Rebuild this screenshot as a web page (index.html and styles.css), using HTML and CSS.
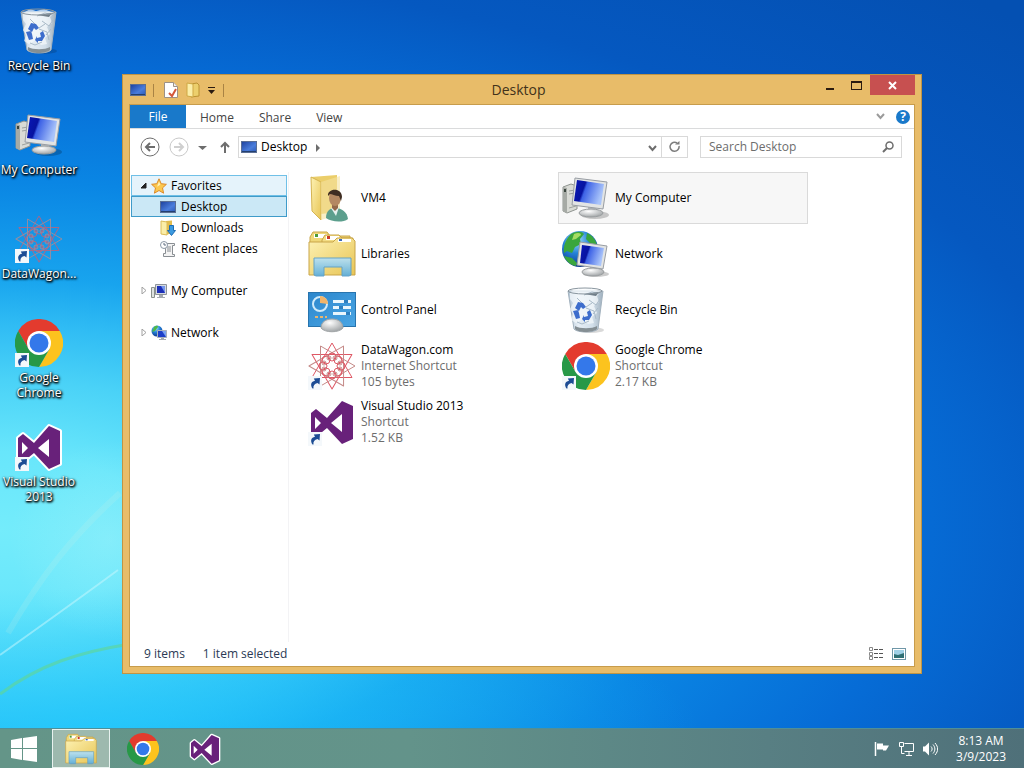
FILE: index.html
```
<!DOCTYPE html>
<html lang="en">

    <head>
        <meta charset="UTF-8">
        <meta name="viewport" content="width=device-width, initial-scale=1.0">
        <title>Desktop</title>
        <link rel="stylesheet" href="styles.css">
    </head>

    <body>
        <!-- icon sprite -->
        <svg class="sprite" aria-hidden="true">
            <defs>
                <linearGradient id="gScreen" x1="0" y1="0" x2="1" y2="0.3">
                    <stop offset="0" stop-color="#0a18b8" />
                    <stop offset="0.38" stop-color="#0713a0" />
                    <stop offset="0.45" stop-color="#3d62e6" />
                    <stop offset="1" stop-color="#a9c4fa" />
                </linearGradient>
                <linearGradient id="gSmall" x1="0" y1="0" x2="1" y2="1">
                    <stop offset="0" stop-color="#1c3f9c" />
                    <stop offset="0.6" stop-color="#4a7ddc" />
                    <stop offset="1" stop-color="#2b58b4" />
                </linearGradient>
                <linearGradient id="gFolder" x1="0" y1="0" x2="1" y2="1">
                    <stop offset="0" stop-color="#fdf2b4" />
                    <stop offset="1" stop-color="#e8c555" />
                </linearGradient>
                <linearGradient id="gStand" x1="0" y1="0" x2="0" y2="1">
                    <stop offset="0" stop-color="#b9e2f6" />
                    <stop offset="1" stop-color="#5aaee0" />
                </linearGradient>
                <linearGradient id="gPanel" x1="0" y1="0" x2="1" y2="1">
                    <stop offset="0" stop-color="#2b86cc" />
                    <stop offset="1" stop-color="#4ba6e4" />
                </linearGradient>
                <linearGradient id="gBin" x1="0" y1="0" x2="1" y2="0">
                    <stop offset="0" stop-color="#b4c6d6" />
                    <stop offset="0.3" stop-color="#e6eef5" />
                    <stop offset="0.7" stop-color="#d2dfea" />
                    <stop offset="1" stop-color="#9fb0be" />
                </linearGradient>
                <radialGradient id="gGlobe" cx="0.4" cy="0.25" r="0.8">
                    <stop offset="0" stop-color="#a8e4fb" />
                    <stop offset="0.45" stop-color="#2583d8" />
                    <stop offset="1" stop-color="#0c2f88" />
                </radialGradient>
                <radialGradient id="gBase" cx="0.4" cy="0.3" r="0.7">
                    <stop offset="0" stop-color="#ffffff" />
                    <stop offset="1" stop-color="#a2a6a8" />
                </radialGradient>
            </defs>

            <symbol id="arrow" viewBox="0 0 14 14">
                <rect width="14" height="14" fill="#f4f8fb" />
                <path d="M4.500 12.500C2 9 3 5.500 7 4.800L5.800 2.500 12 2l-.5 6.500-2-1.600C6.500 7.500 5 9.500 5.500 12.500z" fill="#1d4c94" />
            </symbol>

            <symbol id="computer" viewBox="0 0 48 48">
                <ellipse cx="33" cy="41" rx="14" ry="4" fill="#000" opacity="0.2" />
                <path d="M1 13l8-3 6 2v23L5 39l-4-2z" fill="#d9dbd6" stroke="#8f9490" />
                <path d="M1 13l4 1v25l-4-2z" fill="#a6aaa5" />
                <path d="M2 15h2v3H2z" fill="#39443d" />
                <path d="M7 17l6-1M7 20l6-1M7 34l7-2" stroke="#9da19e" />
                <path d="M26 31l9 1-1 7h-8z" fill="#b9bdc0" />
                <ellipse cx="29" cy="39" rx="12" ry="4" fill="url(#gBase)" stroke="#9a9ea0" />
                <path d="M13 4l32 4-4 27-31-4z" fill="#e2e4e4" stroke="#989da3" />
                <path d="M15 6l27 4-3 21-27-4z" fill="url(#gScreen)" />
            </symbol>

            <symbol id="network" viewBox="0 0 48 48">
                <circle cx="18" cy="19" r="18" fill="url(#gGlobe)" />
                <path d="M9 4c5-3 11-3 13 0l-4 5 1 5-6 3-3 6-5-2-3 2c-1-7 2-14 7-19zM2 26l8 2 5 5-1 3C8 35 4 31 2 26zM25 3c5 2 9 7 10 12l-6-1-5-5z" fill="#3aa63c" />
                <path d="M12 4c4-2 7-1 7 1l-5 4-4 1z" fill="#a5dd64" />
                <ellipse cx="34" cy="44" rx="13" ry="3" fill="#000" opacity="0.2" />
                <path d="M28 36l7 1-1 5h-6z" fill="#b9bdc0" />
                <ellipse cx="31" cy="42" rx="11" ry="4" fill="url(#gBase)" stroke="#9a9ea0" />
                <path d="M18 12l27 4-4 23-26-4z" fill="#e2e4e4" stroke="#989da3" />
                <path d="M20 15l22 3-3 18-21-3z" fill="url(#gScreen)" />
            </symbol>

            <symbol id="bin" viewBox="0 0 48 48">
                <ellipse cx="29" cy="44" rx="13" ry="3" fill="#000" opacity="0.15" />
                <path d="M6 5l6 38c3 4 21 4 24 0l5-38z" fill="url(#gBin)" stroke="#a3b2be" />
                <path d="M8 6l7-4 6 2 8-2 5 2 5 2-4 4 2 6-5 4 3 7-5 4 2 6-6 1-5-5-7 4-5-3 2-6-3-5 3-6-3-4z" fill="#f5f9fc" opacity="0.7" />
                <path d="M22 9l8-3 8 2M27 14l7 5 4-6M24 22l8 3 2 8M15 12l6 6M15 36l5 2 7-3M30 17l-6 4M36 22l-5 6" fill="none" stroke="#a9bac8" />
                <path d="M22 8l15-2-3 4z" fill="#6f7d88" />
                <ellipse cx="23" cy="5" rx="17" ry="3" fill="none" stroke="#8a969f" />
                <path d="M13 40c5 3 17 3 22 0v3c-4 4-19 4-22 0z" fill="#858f94" />
                <path d="M13 22l3-6 5 1 3 4-3 2-2-2-2 4zM11 25l5-1 1 3 1 5-4 1zM20 33l2-4v2l4-1-1-4 3-2 2 5-3 5h-4v2z" fill="#3d6dcc" />
            </symbol>

            <symbol id="chrome" viewBox="0 0 48 48">
                <path d="M3.200 12A24 24 0 0 1 44.800 12H24V24L13.600 30z" fill="#e33b2e" />
                <path d="M44.800 12A24 24 0 0 1 24 48L34.400 30 24 24V12z" fill="#fcc31e" />
                <path d="M24 48A24 24 0 0 1 3.200 12L13.600 30 24 24l10.400 6z" fill="#279847" />
                <circle cx="24" cy="24" r="12" fill="#fff" />
                <circle cx="24" cy="24" r="9.500" fill="#3478ea" />
            </symbol>

            <symbol id="vs" viewBox="0 0 48 48">
                <path d="M3 15l5-4 11 9L34 3l11 5v33l-11 5-15-16-11 9-5-4z" fill="#68217a" stroke="#fff" stroke-width="4" stroke-linejoin="round" />
                <path d="M3 15l5-4 11 9L34 3l11 5v33l-11 5-15-16-11 9-5-4z" fill="#68217a" />
                <path d="M7 19v12l6-6zM34 16v18l-11-9z" fill="#fff" />
            </symbol>

            <symbol id="wagon" viewBox="0 0 48 48">
                <g fill="none" stroke-linejoin="round">
                    <g stroke="#df5966">
                        <path d="M24 1l20 34.500H4z" />
                        <path d="M24 1l20 34.500H4z" transform="rotate(60 24 24)" />
                    </g>
                    <g stroke="#c58a88">
                        <path d="M24 1l20 34.500H4z" transform="rotate(30 24 24)" />
                        <path d="M24 1l20 34.500H4z" transform="rotate(90 24 24)" />
                    </g>
                    <g stroke="#df5966">
                        <circle cx="24" cy="15" r="4" />
                        <circle cx="30" cy="18" r="4" />
                        <circle cx="33" cy="24" r="4" />
                        <circle cx="30" cy="30" r="4" />
                        <circle cx="24" cy="33" r="4" />
                        <circle cx="18" cy="30" r="4" />
                        <circle cx="15" cy="24" r="4" />
                        <circle cx="18" cy="18" r="4" />
                    </g>
                    <g stroke="#c58a88">
                        <circle cx="27" cy="16" r="2" />
                        <circle cx="32" cy="21" r="2" />
                        <circle cx="32" cy="27" r="2" />
                        <circle cx="27" cy="32" r="2" />
                        <circle cx="21" cy="32" r="2" />
                        <circle cx="16" cy="27" r="2" />
                        <circle cx="16" cy="21" r="2" />
                        <circle cx="21" cy="16" r="2" />
                    </g>
                </g>
            </symbol>

            <symbol id="libraries" viewBox="0 0 48 48">
                <path d="M2 44V7l3-5h14l3 4h20v38z" fill="#f0d878" stroke="#c9a548" />
                <path d="M6 4h13v4H6z" fill="#fff" />
                <path d="M7 4h3v3H7z" fill="#4d9a3a" />
                <path d="M14 10l3-5h14l3 3h11v8H14z" fill="#f3dd84" stroke="#c9a548" />
                <path d="M18 6h13v4H18z" fill="#fff" />
                <path d="M19 6h3v3h-3z" fill="#cc3d28" />
                <path d="M1 12h24l4-4h15l3 3v34H1z" fill="url(#gFolder)" stroke="#c9a548" />
                <path d="M30 9h13v3H30z" fill="#fff" />
                <path d="M31 9h3v2h-3z" fill="#3b67b8" />
                <path d="M6 28h37v17l-2 1h-7v-9H16v9H8l-2-1z" fill="url(#gStand)" stroke="#5a9fcb" opacity="0.92" />
            </symbol>

            <symbol id="panel" viewBox="0 0 48 48">
                <rect x="0.500" y="6.500" width="47" height="34" fill="url(#gPanel)" stroke="#2874ae" />
                <circle cx="12" cy="18" r="7" fill="none" stroke="#cfeafa" stroke-width="2" />
                <path d="M12 17V10a8 8 0 0 1 8 8z" fill="#f1b46a" />
                <path d="M25 14h18v3H25zM25 20h18v3H25zM25 26h18v3H25z" fill="#e8f6fd" />
                <path d="M36 14h4v3h-4zM31 20h4v3h-4zM38 26h4v3h-4z" fill="#2c7fc0" />
                <path d="M7 31h12" stroke="#e8b56e" stroke-width="2" stroke-dasharray="3 2" />
                <path d="M13 42c0-6 5-9 11-9s11 3 11 9c-4 5-18 5-22 0z" fill="url(#gBase)" stroke="#a2a6a8" />
            </symbol>

            <symbol id="user" viewBox="0 0 48 48">
                <path d="M3 3l26-2v37l-16 2z" fill="#ebce6a" />
                <path d="M3 3l10 5v38L4 37z" fill="url(#gFolder)" stroke="#d5b452" />
                <path d="M13 8L32 2v38l-19 6z" fill="#f5e3a0" opacity="0.6" />
                <path d="M18 44c0-7 4-10 9-10 7 0 12 4 13 11-5 4-17 3-22-1z" fill="#5c9f8d" />
                <path d="M23 34l8-1-3 9z" fill="#e6f1ee" />
                <path d="M24 28h6v6l-3 3-3-3z" fill="#94694a" />
                <ellipse cx="27" cy="24" rx="6" ry="8" fill="#b48862" />
                <path d="M20 22c-1-8 14-9 14 1l-1 4-2-5c-4 0-7-2-9-2z" fill="#3f2d22" />
            </symbol>

            <symbol id="desk" viewBox="0 0 16 16">
                <rect x="0.500" y="2.500" width="15" height="11" fill="url(#gSmall)" stroke="#5a6e94" />
                <path d="M1 12.500h14" stroke="#24406f" />
            </symbol>

            <symbol id="doc" viewBox="0 0 16 16">
                <path d="M1.500 .5h9l4 4v11h-13z" fill="#fff" stroke="#9c9186" />
                <path d="M10.500 .5v4h4" fill="#eee" stroke="#9c9186" />
                <path d="M6 11l3 3 4-7" fill="none" stroke="#d4573a" stroke-width="2" />
            </symbol>

            <symbol id="folder" viewBox="0 0 16 16">
                <path d="M6 2l6-1 2 2v11l-8 1z" fill="#eccf6c" stroke="#bb9232" />
                <path d="M2 1l6 1v13l-6-1z" fill="#fbeea8" stroke="#cfa845" />
            </symbol>

            <symbol id="star" viewBox="0 0 16 16">
                <path d="M8 .8l2.200 4.900 5.200.6-3.900 3.600 1.100 5.300L8 12.500l-4.600 2.700 1.100-5.300L.6 6.300l5.200-.6z" fill="#fcc84e" stroke="#dc8a2a" />
                <path d="M8 3.500l1.300 3.200-3.300 2z" fill="#fff1b8" />
            </symbol>

            <symbol id="downloads" viewBox="0 0 16 16">
                <path d="M6 1l6-.5V13l-6 2z" fill="#e2bd4e" />
                <path d="M1 1l6 1v13l-6-1z" fill="#fbeea8" stroke="#dcbc58" />
                <path d="M9.500 5.500h4v5h2l-4 5-4-5h2z" fill="#3b9ae0" stroke="#1d6db4" />
            </symbol>

            <symbol id="recent" viewBox="0 0 16 16">
                <path d="M5.500 2.500h9v2h-2v9h2v2h-11v-3h2z" fill="#f3f3f3" stroke="#898e93" />
                <path d="M7 6h4M7 8h4M7 10h4" stroke="#898e93" />
                <circle cx="4" cy="4" r="3.500" fill="#fff" stroke="#8b97a5" />
                <path d="M4 2v2h2" fill="none" stroke="#5e6d80" />
            </symbol>

            <symbol id="pc16" viewBox="0 0 16 16">
                <path d="M.5 4.500h3v10h-3z" fill="#dfe3e0" stroke="#8a918d" />
                <path d="M8 12h4v2h2v1H6v-1h2z" fill="#a5abb0" />
                <path d="M4.500 1.500h11v10h-11z" fill="#d7dbe0" stroke="#8d939b" />
                <path d="M6 3h8v7H6z" fill="#1d30b8" />
                <path d="M10 3h4v7z" fill="#7496ee" />
            </symbol>

            <symbol id="net16" viewBox="0 0 16 16">
                <circle cx="6" cy="6" r="5.500" fill="url(#gGlobe)" />
                <path d="M3 2c3-2 4-1 4 0L4 6 1 7z" fill="#4fb848" />
                <path d="M10 13h3v1h2v1H8v-1h2z" fill="#a5abb0" />
                <path d="M6.500 5.500h9v7h-9z" fill="#1d3fc8" stroke="#a9b1bb" />
                <path d="M11 6h4v6z" fill="#7aa2f2" />
            </symbol>
        </svg>

        <div class="screen">
            <main class="workspace">
                <svg class="streaks" viewBox="0 0 400 300" aria-hidden="true">
                    <path d="M0 227C45 195 80 170 118 142" stroke="#c9f8fd" stroke-width="2" opacity="0.5" />
                    <path d="M8 205C40 150 70 110 120 65" stroke="#d7efe6" stroke-width="6" opacity="0.15" />
                    <path d="M0 266C40 236 80 224 130 216" stroke="#5cd6a0" stroke-width="3" opacity="0.7" />
                </svg>

                <nav class="shortcuts" aria-label="Desktop icons">
                    <a class="shortcut" href="#bin">
                        <svg class="icon-48"><use href="#bin" /></svg>
                        <span>Recycle Bin</span>
                    </a>
                    <a class="shortcut" href="#computer">
                        <svg class="icon-48"><use href="#computer" /></svg>
                        <span>My Computer</span>
                    </a>
                    <a class="shortcut" href="#wagon">
                        <svg class="icon-48"><use class="faded" href="#wagon" /><use href="#arrow" x="0" y="34" width="14" height="14" /></svg>
                        <span>DataWagon...</span>
                    </a>
                    <a class="shortcut" href="#chrome">
                        <svg class="icon-48"><use href="#chrome" /><use href="#arrow" x="0" y="34" width="14" height="14" /></svg>
                        <span>Google Chrome</span>
                    </a>
                    <a class="shortcut" href="#vs">
                        <svg class="icon-48"><use href="#vs" /><use href="#arrow" x="0" y="34" width="14" height="14" /></svg>
                        <span>Visual Studio 2013</span>
                    </a>
                </nav>

                <section class="window">
                    <header class="titlebar">
                        <div class="quick">
                            <svg class="icon-16"><use href="#desk" /></svg>
                            <i class="quick-line"></i>
                            <button type="button" aria-label="Properties"><svg class="icon-16"><use href="#doc" /></svg></button>
                            <button type="button" aria-label="New folder"><svg class="icon-16"><use href="#folder" /></svg></button>
                            <button type="button" aria-label="Customize toolbar"><svg class="icon-9" viewBox="0 0 9 9"><path d="M1 1h7v1H1zM1 4h7L4.500 8z" fill="#2b1b10" /></svg></button>
                            <i class="quick-line"></i>
                        </div>
                        <h1>Desktop</h1>
                        <div class="controls">
                            <button type="button" aria-label="Minimize"><svg class="icon-11" viewBox="0 0 11 11"><path d="M2 8h8v2H2z" fill="#2b1b10" /></svg></button>
                            <button type="button" aria-label="Maximize"><svg class="icon-11" viewBox="0 0 11 11"><path d="M0 1h11v9H0zM1 3v6h9V3z" fill="#2b1b10" fill-rule="evenodd" /></svg></button>
                            <button type="button" class="close" aria-label="Close"><svg class="icon-9" viewBox="0 0 9 9"><path d="M1 1l7 7M8 1L1 8" stroke="#fff" stroke-width="2" /></svg></button>
                        </div>
                    </header>

                    <div class="client">
                        <div class="ribbon">
                            <button type="button" class="tab file">File</button>
                            <button type="button" class="tab">Home</button>
                            <button type="button" class="tab">Share</button>
                            <button type="button" class="tab">View</button>
                            <div class="ribbon-end">
                                <button type="button" aria-label="Expand ribbon"><svg class="icon-9" viewBox="0 0 9 9"><path d="M1 2l3.500 4L8 2" fill="none" stroke="#9b9b9b" stroke-width="2" /></svg></button>
                                <button type="button" class="help" aria-label="Help">?</button>
                            </div>
                        </div>

                        <div class="address-row">
                            <button type="button" aria-label="Back"><svg class="icon-20" viewBox="0 0 20 20"><circle cx="10" cy="10" r="9" fill="#fff" stroke="#6d6d6d" /><path d="M15 10H6M10 6l-4 4 4 4" fill="none" stroke="#6d6d6d" stroke-width="2" /></svg></button>
                            <button type="button" aria-label="Forward"><svg class="icon-20" viewBox="0 0 20 20"><circle cx="10" cy="10" r="9" fill="#fff" stroke="#c9c9c9" /><path d="M5 10h9M10 6l4 4-4 4" fill="none" stroke="#cfcfcf" stroke-width="2" /></svg></button>
                            <button type="button" aria-label="Recent locations"><svg class="icon-9" viewBox="0 0 9 9"><path d="M0 3h9L4.500 7z" fill="#6d6d6d" /></svg></button>
                            <button type="button" class="up" aria-label="Up"><svg class="icon-12" viewBox="0 0 12 12"><path d="M6 12V2M2 6l4-4 4 4" fill="none" stroke="#6d6d6d" stroke-width="2" /></svg></button>
                            <div class="address">
                                <button type="button" class="crumb"><svg class="icon-16"><use href="#desk" /></svg>Desktop</button>
                                <svg class="icon-9" viewBox="0 0 9 9"><path d="M3 1l4 4-4 4z" fill="#6d6d6d" /></svg>
                                <button type="button" class="drop" aria-label="Previous locations"><svg class="icon-9" viewBox="0 0 9 9"><path d="M1 3l3.500 4L8 3" fill="none" stroke="#6d6d6d" stroke-width="2" /></svg></button>
                                <button type="button" class="refresh" aria-label="Refresh"><svg class="icon-12" viewBox="0 0 12 12"><path d="M10 5a4.500 4.500 0 1 1-2-3" fill="none" stroke="#7d7d7d" stroke-width="1.500" /><path d="M6 3.500h4.500V0z" fill="#7d7d7d" /></svg></button>
                            </div>
                            <div class="search">
                                <input type="text" placeholder="Search Desktop" aria-label="Search Desktop">
                                <svg class="icon-12" viewBox="0 0 12 12"><circle cx="7.500" cy="4.500" r="3.500" fill="none" stroke="#6d6d6d" stroke-width="1.500" /><path d="M5 7l-4 4" stroke="#6d6d6d" stroke-width="2" /></svg>
                            </div>
                        </div>

                        <div class="panes">
                            <nav class="tree" aria-label="Folders">
                                <a class="hot" href="#favorites"><svg class="icon-7" viewBox="0 0 7 7"><path d="M6 1v5H1z" fill="#222" stroke="#222" /></svg><svg class="icon-16"><use href="#star" /></svg>Favorites</a>
                                <a class="child selected" href="#desktop"><svg class="icon-16"><use href="#desk" /></svg>Desktop</a>
                                <a class="child" href="#downloads"><svg class="icon-16"><use href="#downloads" /></svg>Downloads</a>
                                <a class="child" href="#recent"><svg class="icon-16"><use href="#recent" /></svg>Recent places</a>
                                <a class="group" href="#computer"><svg class="icon-7" viewBox="0 0 7 7"><path d="M2 0l4 3.500L2 7z" fill="#fff" stroke="#a0a0a0" /></svg><svg class="icon-16"><use href="#pc16" /></svg>My Computer</a>
                                <a class="group" href="#network"><svg class="icon-7" viewBox="0 0 7 7"><path d="M2 0l4 3.500L2 7z" fill="#fff" stroke="#a0a0a0" /></svg><svg class="icon-16"><use href="#net16" /></svg>Network</a>
                            </nav>

                            <div class="files">
                                <a class="tile" href="#user">
                                    <svg class="icon-48"><use href="#user" /></svg>
                                    <span>VM4</span>
                                </a>
                                <a class="tile active" href="#computer">
                                    <svg class="icon-48"><use href="#computer" /></svg>
                                    <span>My Computer</span>
                                </a>
                                <a class="tile" href="#libraries">
                                    <svg class="icon-48"><use href="#libraries" /></svg>
                                    <span>Libraries</span>
                                </a>
                                <a class="tile" href="#network">
                                    <svg class="icon-48"><use href="#network" /></svg>
                                    <span>Network</span>
                                </a>
                                <a class="tile" href="#panel">
                                    <svg class="icon-48"><use href="#panel" /></svg>
                                    <span>Control Panel</span>
                                </a>
                                <a class="tile" href="#bin">
                                    <svg class="icon-48"><use href="#bin" /></svg>
                                    <span>Recycle Bin</span>
                                </a>
                                <a class="tile" href="#wagon">
                                    <svg class="icon-48"><use href="#wagon" /><use href="#arrow" x="0" y="34" width="14" height="14" /></svg>
                                    <span>DataWagon.com<small>Internet Shortcut</small><small>105 bytes</small></span>
                                </a>
                                <a class="tile" href="#chrome">
                                    <svg class="icon-48"><use href="#chrome" /><use href="#arrow" x="0" y="34" width="14" height="14" /></svg>
                                    <span>Google Chrome<small>Shortcut</small><small>2.17 KB</small></span>
                                </a>
                                <a class="tile" href="#vs">
                                    <svg class="icon-48"><use href="#vs" /><use href="#arrow" x="0" y="34" width="14" height="14" /></svg>
                                    <span>Visual Studio 2013<small>Shortcut</small><small>1.52 KB</small></span>
                                </a>
                            </div>
                        </div>

                        <footer class="status">
                            <span>9 items</span>
                            <span>1 item selected</span>
                            <div class="views">
                                <button type="button" aria-label="Details view"><svg class="icon-16" viewBox="0 0 16 16"><path d="M1.500 1.500h3v3h-3zM1.500 6.500h3v3h-3zM1.500 10.500h3v3h-3z" fill="#fff" stroke="#888" /><path d="M6 3.500h4M11 3.500h4M6 7.500h4M11 7.500h4M6 11.500h4M11 11.500h4" stroke="#555" /></svg></button>
                                <button type="button" aria-label="Large icons view"><svg class="icon-16" viewBox="0 0 16 16"><rect x="1.500" y="2.500" width="13" height="11" fill="#fff" stroke="#6f97a8" /><path d="M3 4h10v8H3z" fill="#9fd0e6" /><path d="M3 8l4 1 6-2v5H3z" fill="#2f6f74" /></svg></button>
                            </div>
                        </footer>
                    </div>
                </section>
            </main>

            <footer class="taskbar">
                <button type="button" class="start" aria-label="Start"><svg class="icon-26" viewBox="0 0 26 26"><path d="M0 4l11-2v10H0zM12 2l14-2v12H12zM0 13h11v11L0 22zM12 13h14v13l-14-2z" fill="#fff" /></svg></button>
                <button type="button" class="task open" aria-label="File Explorer"><svg class="icon-32"><use href="#libraries" /></svg></button>
                <button type="button" class="task" aria-label="Google Chrome"><svg class="icon-32"><use href="#chrome" /></svg></button>
                <button type="button" class="task" aria-label="Visual Studio 2013"><svg class="icon-32"><use href="#vs" /></svg></button>
                <div class="tray">
                    <button type="button" aria-label="Action Center"><svg class="icon-16" viewBox="0 0 16 16"><path d="M1.500 1v14" stroke="#fff" stroke-width="1.500" /><path d="M3 2.500h6v2h6l-3 5H9v-1H3z" fill="#fff" /></svg></button>
                    <button type="button" aria-label="Network"><svg class="icon-16" viewBox="0 0 16 16"><path d="M6.500 2.500h9v8h-9M8 14.500h6M11 11v3M1.500 1.500h4v4h-4zM3.500 6v6.500h3" fill="none" stroke="#fff" /></svg></button>
                    <button type="button" aria-label="Volume"><svg class="icon-16" viewBox="0 0 16 16"><path d="M1 5.500h2l4-4v13l-4-4H1z" fill="#fff" /><path d="M9 5.500c1.500 1.500 1.500 3.500 0 5M11 3.500c2.500 3 2.500 6 0 9M13 2c3.500 4 3.500 8 0 12" fill="none" stroke="#fff" /></svg></button>
                    <time class="clock"><span>8:13 AM</span><span>3/9/2023</span></time>
                </div>
            </footer>
        </div>
    </body>

</html>
```
FILE: styles.css
```
html {
    height: 100%;
}

body {
    margin: 0px;
    height: 100%;
    overflow: hidden;
    font-family: "Open Sans", "Noto Sans", sans-serif;
    font-size: 12px;
    line-height: 16px;
    color: #000;
}

body * {
    box-sizing: border-box;
}

button {
    display: flex;
    align-items: center;
    justify-content: center;
    margin: 0px;
    padding: 0px;
    border: none;
    background: none;
    font: inherit;
    color: inherit;
}

a {
    color: inherit;
    text-decoration: none;
}

svg {
    flex: none;
    display: block;
}

.sprite {
    position: absolute;
    width: 0px;
    height: 0px;
}

.icon-7 { width: 7px; height: 7px; }
.icon-9 { width: 9px; height: 9px; }
.icon-11 { width: 11px; height: 11px; }
.icon-12 { width: 12px; height: 12px; }
.icon-16 { width: 16px; height: 16px; }
.icon-20 { width: 20px; height: 20px; }
.icon-26 { width: 26px; height: 26px; }
.icon-32 { width: 32px; height: 32px; }
.icon-48 { width: 48px; height: 48px; }

.screen {
    display: flex;
    flex-direction: column;
    height: 100%;
}

/* wallpaper */
.workspace {
    position: relative;
    flex: 1;
    min-height: 0px;
    background:
        radial-gradient(circle at 110px 540px, rgba(190, 250, 250, 0.3), rgba(150, 240, 250, 0) 100px),
        radial-gradient(ellipse 600px 140px at 100px 100%, rgba(30, 205, 255, 0.6), rgba(30, 190, 255, 0)),
        radial-gradient(ellipse 1200px 600px at 0px 530px, #74ecfb 0%, #68e6fb 13%, #4ad2f7 25%, #30bcf4 34%, #18a4ee 42%, #0a86e4 58%, #066cd6 76%, #0558c0 94%, #0450b2 120%);
}

.streaks {
    position: absolute;
    left: 0px;
    bottom: 0px;
    width: 400px;
    height: 300px;
    fill: none;
}

.shortcuts {
    position: relative;
    width: 78px;
    padding-top: 7px;
}

.shortcut {
    display: flex;
    flex-direction: column;
    align-items: center;
    gap: 3px;
    height: 104px;
    color: #fff;
    line-height: 15px;
    text-align: center;
    text-shadow: 0px 1px 2px #000, 1px 1px 2px #000, 1px 1px 3px #000;
}

.faded {
    opacity: 0.7;
}

/* explorer window */
.window {
    position: absolute;
    top: 74px;
    right: 102px;
    bottom: 54px;
    left: 122px;
    display: flex;
    flex-direction: column;
    padding: 0px 6px 6px 6px;
    border: 1px solid #bf9444;
    background: #e8bc69;
}

.titlebar {
    display: grid;
    grid-template-columns: 1fr auto 1fr;
    height: 29px;
}

.titlebar h1 {
    margin: 0px;
    padding-right: 7px;
    font-size: 14px;
    font-weight: 400;
    line-height: 30px;
    color: #42321a;
}

.quick {
    display: flex;
    align-items: center;
    gap: 6px;
    padding-left: 1px;
}

.quick-line {
    width: 1px;
    height: 13px;
    margin: 0px 3px 0px 1px;
    background: #a98344;
}

.controls {
    display: flex;
    align-items: flex-start;
    justify-content: flex-end;
}

.controls button {
    width: 27px;
    height: 20px;
}

.controls .close {
    width: 45px;
    background: #c75050;
}

.client {
    display: flex;
    flex-direction: column;
    flex: 1;
    min-height: 0px;
    border: 1px solid #c79c4c;
    background: #fff;
}

.ribbon {
    display: flex;
    height: 24px;
    border-bottom: 1px solid #dadbdc;
}

.tab {
    padding: 2px 11px 0px 14px;
    color: #444;
}

.tab.file {
    width: 56px;
    padding: 0px;
    background: #1979ca;
    color: #fff;
}

.ribbon-end {
    display: flex;
    align-items: center;
    gap: 11px;
    margin-left: auto;
    padding-right: 4px;
}

.help {
    width: 14px;
    height: 14px;
    border-radius: 50%;
    background: #1979ca;
    color: #fff;
    font-weight: 700;
}

.address-row {
    display: flex;
    align-items: center;
    gap: 9px;
    height: 36px;
    padding: 0px 12px 0px 10px;
}

.address-row .up {
    margin: 0px -2px 0px 3px;
}

.address,
.search {
    display: flex;
    align-items: center;
    height: 22px;
    border: 1px solid #d9d9d9;
}

.address {
    flex: 1;
    gap: 6px;
    padding-left: 2px;
}

.crumb {
    gap: 4px;
}

.drop {
    margin-left: auto;
}

.address .refresh {
    width: 26px;
    height: 20px;
    margin-left: -2px;
    border-left: 1px solid #d9d9d9;
}

.search {
    width: 202px;
    margin-left: 3px;
    padding: 0px 7px 0px 8px;
}

.search input {
    flex: 1;
    min-width: 0px;
    padding: 0px;
    border: none;
    outline: none;
    background: none;
    font: inherit;
    color: #000;
}

.search input::placeholder {
    color: #6d6d6d;
    opacity: 1;
}

.panes {
    display: flex;
    flex: 1;
    min-height: 0px;
    padding-top: 7px;
}

.tree {
    width: 159px;
    padding: 3px 1px 0px 1px;
    border-right: 1px solid #f3f3f5;
}

.tree a {
    display: flex;
    align-items: center;
    gap: 4px;
    height: 21px;
    padding-left: 8px;
    border: 1px solid transparent;
}

.tree .child {
    gap: 5px;
    padding-left: 28px;
}

.tree .group {
    margin-top: 21px;
}

.tree .hot {
    border-color: #70c0e7;
    background: #e5f3fb;
}

.tree .selected {
    border-color: #3f9bc9;
    background: #cbe8f6;
}

.files {
    display: grid;
    flex: 1;
    grid-template-columns: repeat(auto-fill, 250px);
    grid-auto-rows: 52px;
    gap: 4px;
    padding-left: 15px;
}

.tile {
    display: flex;
    align-items: center;
    gap: 5px;
    padding-left: 3px;
    border: 1px solid transparent;
}

.tile.active {
    border-color: #dadada;
    background: #f7f7f7;
}

.tile small {
    display: block;
    font-size: 12px;
    color: #6d6d6d;
}

.status {
    display: flex;
    align-items: center;
    gap: 18px;
    height: 24px;
    padding: 0px 7px 0px 14px;
    color: #2b3a55;
}

.views {
    display: flex;
    gap: 7px;
    margin-left: auto;
}

/* taskbar */
.taskbar {
    display: flex;
    align-items: center;
    gap: 4px;
    height: 40px;
    border-top: 1px solid #4f8f98;
    background: linear-gradient(90deg, #649588 0%, #63938a 40%, #587f83 75%, #4f7079 100%);
    color: #fff;
}

.start {
    width: 48px;
    height: 39px;
}

.task {
    width: 58px;
    height: 39px;
}

.task.open {
    border: 1px solid #e8f2ef;
    background: #9db9ae;
}

.tray {
    display: flex;
    align-items: center;
    gap: 8px;
    margin-left: auto;
    padding-right: 18px;
}

.clock {
    display: flex;
    flex-direction: column;
    align-items: center;
    margin-left: 10px;
}
```
